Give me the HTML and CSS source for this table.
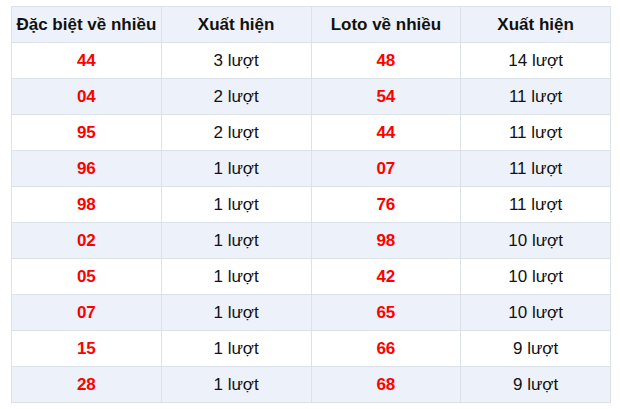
FILE: index.html
```html
<!DOCTYPE html>
<html lang="vi">
<head>
<meta charset="utf-8">
<link rel="stylesheet" href="styles.css">
</head>
<body>
<table class="stats">
  <thead>
    <tr><th>Đặc biệt về nhiều</th><th>Xuất hiện</th><th>Loto về nhiều</th><th>Xuất hiện</th></tr>
  </thead>
  <tbody>
    <tr><td class="num">44</td><td>3 lượt</td><td class="num">48</td><td>14 lượt</td></tr>
    <tr><td class="num">04</td><td>2 lượt</td><td class="num">54</td><td>11 lượt</td></tr>
    <tr><td class="num">95</td><td>2 lượt</td><td class="num">44</td><td>11 lượt</td></tr>
    <tr><td class="num">96</td><td>1 lượt</td><td class="num">07</td><td>11 lượt</td></tr>
    <tr><td class="num">98</td><td>1 lượt</td><td class="num">76</td><td>11 lượt</td></tr>
    <tr><td class="num">02</td><td>1 lượt</td><td class="num">98</td><td>10 lượt</td></tr>
    <tr><td class="num">05</td><td>1 lượt</td><td class="num">42</td><td>10 lượt</td></tr>
    <tr><td class="num">07</td><td>1 lượt</td><td class="num">65</td><td>10 lượt</td></tr>
    <tr><td class="num">15</td><td>1 lượt</td><td class="num">66</td><td>9 lượt</td></tr>
    <tr><td class="num">28</td><td>1 lượt</td><td class="num">68</td><td>9 lượt</td></tr>
  </tbody>
</table>
</body>
</html>
```
FILE: styles.css
```css
html, body {
  margin: 0;
  padding: 0;
  background: #ffffff;
}
body {
  padding: 6px 0 0 11px;
  font-family: "Liberation Sans", Arial, sans-serif;
  font-size: 17px;
  color: #111111;
}
.stats {
  border-collapse: collapse;
  width: 600px;
  table-layout: fixed;
}
.stats th,
.stats td {
  border: 1px solid #dde1e8;
  height: 36px;
  padding: 0 2px;
  text-align: center;
  vertical-align: middle;
  box-sizing: border-box;
}
.stats th {
  font-weight: bold;
  background: #edf1f9;
}
.stats tbody tr:nth-child(even) td {
  background: #edf1f9;
}
.stats td.num {
  color: #ff0000;
  font-weight: bold;
}
```
